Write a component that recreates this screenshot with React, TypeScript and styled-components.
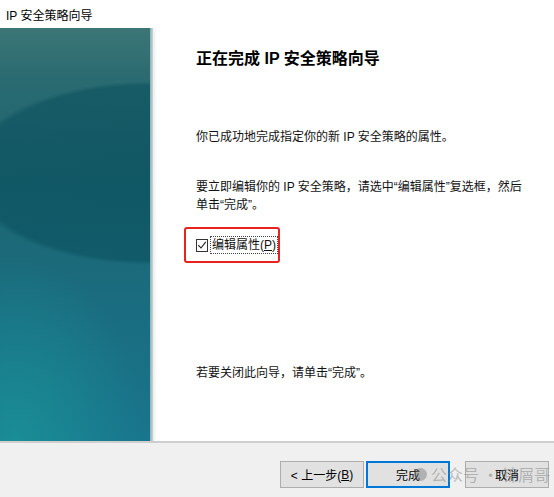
import React from 'react';
import styled, { createGlobalStyle } from 'styled-components';

const GlobalStyle = createGlobalStyle`
	html, body {
		margin: 0;
		padding: 0;
		background: #fff;
	}
	body {
		font-family: 'Liberation Sans', 'Noto Sans CJK SC', sans-serif;
		color: #000;
	}
`;

const Window = styled.div`
	width: 554px;
	height: 497px;
	display: flex;
	flex-direction: column;
	background: #fff;
	overflow: hidden;
	position: relative;
`;

const TitleBar = styled.div`
	height: 28px;
	display: flex;
	align-items: center;
	padding-left: 6px;
	font-size: 12px;
	background: #fff;
	flex-shrink: 0;
`;

const Main = styled.div`
	height: 413px;
	display: flex;
	flex-direction: row;
	border-bottom: 2px solid #cfcfcf;
	flex-shrink: 0;
`;

const SidePanel = styled.div`
	width: 150px;
	flex-shrink: 0;
	background:
		radial-gradient(ellipse 185px 92px at 150px 145px, rgba(6, 76, 90, 0.55) 0%, rgba(6, 76, 90, 0.5) 95%, rgba(6, 76, 90, 0) 100%),
		radial-gradient(ellipse 130px 190px at 15px 420px, rgba(26, 150, 153, 0.75) 0%, rgba(26, 150, 153, 0) 100%),
		linear-gradient(180deg, #3c7676 0%, #2a6b71 12%, #1d6470 35%, #1a6c7e 65%, #19758d 100%);
`;

const SideEdge = styled.div`
	width: 3px;
	flex-shrink: 0;
	background: linear-gradient(to right, #8eb1b4, #c9d6d8);
	box-shadow: 2px 0 3px rgba(0, 0, 0, 0.08);
`;

const Content = styled.div`
	flex: 1;
	padding: 18px 10px 0 43px;
	display: flex;
	flex-direction: column;
	font-size: 12px;
	line-height: 18px;
	color: #111;
	white-space: nowrap;
`;

const Heading = styled.h1`
	margin: 0;
	font-size: 16px;
	line-height: 26px;
	font-weight: 700;
	color: #000;
`;

const Paragraph = styled.p<{ top: number }>`
	margin: ${(p) => p.top}px 0 0 0;
`;

const CheckRow = styled.div`
	box-sizing: border-box;
	margin-top: 13px;
	margin-left: -12px;
	width: 96px;
	height: 36px;
	border: 2px solid #e8231f;
	border-radius: 3px;
	display: flex;
	align-items: center;
	padding-left: 10px;
	gap: 2px;
`;

const CheckBox = styled.span`
	width: 11px;
	height: 11px;
	border: 1px solid #333;
	background: #fff;
	display: flex;
	align-items: center;
	justify-content: center;
`;

const CheckLabel = styled.span`
	border: 1px dotted #444;
	padding: 0 1px;
	line-height: 16px;
	font-size: 12px;
`;

const Footer = styled.div`
	flex: 1;
	background: #f0f0f0;
	display: flex;
	justify-content: flex-end;
	align-items: flex-start;
	padding: 18px 5px 0 0;
`;

const Button = styled.button<{ primary?: boolean; gapAfter?: number }>`
	width: 84px;
	height: 27px;
	margin-right: ${(p) => p.gapAfter ?? 0}px;
	background: #e1e1e1;
	border: 1px solid ${(p) => (p.primary ? '#0078d7' : '#adadad')};
	box-shadow: ${(p) => (p.primary ? 'inset 0 0 0 1px #0078d7' : 'none')};
	font-family: 'Liberation Sans', 'Noto Sans CJK SC', sans-serif;
	font-size: 12px;
	color: #000;
	padding: 0;
	display: flex;
	align-items: center;
	justify-content: center;
`;

const Mnemonic = styled.span`
	text-decoration: underline;
`;

const Watermark = styled.div`
	position: absolute;
	left: 414px;
	top: 463px;
	display: flex;
	align-items: center;
	gap: 4px;
	font-size: 16px;
	line-height: 22px;
	font-family: 'Noto Sans CJK SC', sans-serif;
	color: rgba(130, 130, 130, 0.5);
	pointer-events: none;
	white-space: nowrap;
`;

const WatermarkDot = styled.span`
	width: 13px;
	height: 13px;
	border-radius: 50%;
	background: rgba(120, 120, 120, 0.45);
`;

export default function App() {
	return (
		<>
			<GlobalStyle />
			<Window>
				<TitleBar>IP 安全策略向导</TitleBar>
				<Main>
					<SidePanel />
					<SideEdge />
					<Content>
						<Heading>正在完成 IP 安全策略向导</Heading>
						<Paragraph top={56}>你已成功地完成指定你的新 IP 安全策略的属性。</Paragraph>
						<Paragraph top={32}>
							要立即编辑你的 IP 安全策略，请选中“编辑属性”复选框，然后
							<br />
							单击“完成”。
						</Paragraph>
						<CheckRow>
							<CheckBox>
								<svg width="10" height="10" viewBox="0 0 10 10">
									<path d="M1.2 5.2 L4 8 L8.8 1.8" fill="none" stroke="#222" strokeWidth="1.1" />
								</svg>
							</CheckBox>
							<CheckLabel>
								编辑属性(<Mnemonic>P</Mnemonic>)
							</CheckLabel>
						</CheckRow>
						<Paragraph top={101}>若要关闭此向导，请单击“完成”。</Paragraph>
					</Content>
				</Main>
				<Footer>
					<Button gapAfter={2}>
						&lt; 上一步(<Mnemonic>B</Mnemonic>)
					</Button>
					<Button primary gapAfter={15}>
						完成
					</Button>
					<Button>取消</Button>
				</Footer>
				<Watermark>
					<WatermarkDot />
					公众号 · 锦屑哥
				</Watermark>
			</Window>
		</>
	);
}
